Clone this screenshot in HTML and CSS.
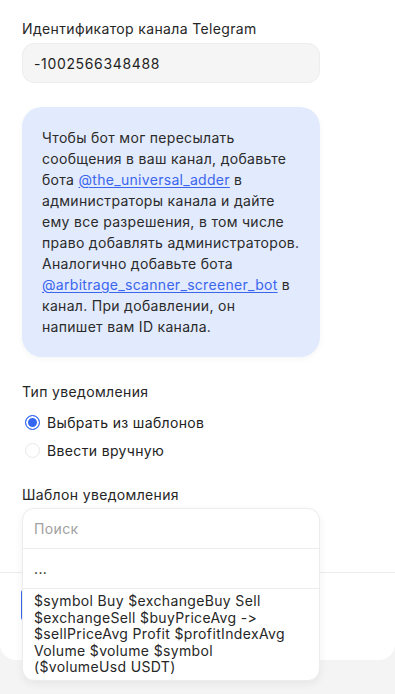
FILE: index.html
```html
<!DOCTYPE html>
<html lang="ru">
<head>
<meta charset="utf-8">
<link rel="stylesheet" href="styles.css">
</head>
<body>
<div class="card">
  <div class="form">
    <div class="label">Идентификатор канала Telegram</div>
    <div class="input">-1002566348488</div>

    <div class="info">Чтобы бот мог пересылать<br>сообщения в ваш канал, добавьте<br>бота <a class="link" href="#">@the_universal_adder</a> в<br>администраторы канала и дайте<br>ему все разрешения, в том числе<br>право добавлять администраторов.<br>Аналогично добавьте бота<br><a class="link" href="#">@arbitrage_scanner_screener_bot</a> в<br>канал. При добавлении, он<br>напишет вам ID канала.</div>

    <div class="label label-type">Тип уведомления</div>
    <div class="radios">
      <div class="radio-row"><span class="radio radio-on"></span><span>Выбрать из шаблонов</span></div>
      <div class="radio-row"><span class="radio"></span><span>Ввести вручную</span></div>
    </div>

    <div class="label label-tpl">Шаблон уведомления</div>
    <div class="select-wrap">
      <div class="select-field"></div>
      <div class="dropdown">
        <div class="dd-row dd-search">Поиск</div>
        <div class="dd-row">...</div>
        <div class="dd-item">$symbol Buy $exchangeBuy Sell $exchangeSell $buyPriceAvg -&gt; $sellPriceAvg Profit $profitIndexAvg Volume $volume $symbol ($volumeUsd USDT)</div>
      </div>
    </div>
  </div>
  <div class="divider"></div>
  <div class="actions">
    <div class="btn"></div>
  </div>
</div>
</body>
</html>
```

FILE: styles.css
```css
* { box-sizing: border-box; }
html, body {
  margin: 0;
  padding: 0;
}
body {
  background: #f4f4f4;
  font-family: Inter, "Noto Sans", sans-serif;
  font-size: 14px;
  letter-spacing: 0.35px;
  font-feature-settings: "calt" 0, "liga" 0;
  color: #232323;
  width: 395px;
  height: 694px;
  overflow: hidden;
}
.card {
  background: #ffffff;
  border-radius: 0 0 16px 16px;
  height: 660px;
  padding-top: 19px;
}
.form {
  padding-left: 22px;
  width: 320px;
  display: flex;
  flex-direction: column;
}
.label {
  line-height: 20px;
  font-size: 14px;
  color: #262626;
}
.input {
  margin-top: 4px;
  height: 40px;
  border-radius: 12px;
  background: #f5f5f5;
  border: 1px solid #ededed;
  padding: 0 11px;
  display: flex;
  align-items: center;
  color: #1f1f1f;
  letter-spacing: 0.65px;
}
.info {
  margin-top: 24px;
  background: #e2eafd;
  border-radius: 20px;
  padding: 20px 4px 20px 20px;
  line-height: 21px;
  letter-spacing: 0.3px;
  white-space: nowrap;
  color: #2b2b2b;
  box-shadow: 0 2px 6px rgba(0,0,0,0.04);
}
.link {
  color: #3a66ee;
  text-decoration: underline;
  text-underline-offset: 2px;
}
.label-type {
  margin-top: 25px;
}
.radios {
  margin-top: 6px;
  display: flex;
  flex-direction: column;
}
.radio-row {
  height: 28px;
  display: flex;
  align-items: center;
  gap: 7px;
  padding-left: 3px;
  color: #222;
}
.radio {
  width: 15px;
  height: 15px;
  border-radius: 50%;
  border: 1.5px solid #e8e8e8;
  background: #fff;
  flex: none;
}
.radio-on {
  border: 1px solid #3367f1;
  background: #3367f1;
  box-shadow: inset 0 0 0 2px #fff;
}
.label-tpl {
  margin-top: 21px;
}
.select-wrap {
  position: relative;
  margin-top: 4px;
}
.select-field {
  height: 40px;
}
.dropdown {
  position: absolute;
  left: 0;
  top: -1px;
  width: 298px;
  background: #fff;
  border: 1px solid #ececec;
  border-radius: 12px;
  box-shadow: 0 3px 8px rgba(0,0,0,0.06);
  z-index: 5;
  overflow: hidden;
}
.dd-row {
  height: 40px;
  display: flex;
  align-items: center;
  padding: 0 11px;
  border-bottom: 1px solid #ececec;
  color: #222;
}
.dd-search {
  color: #a0a0a0;
}
.dd-item {
  padding: 4px 11px 4px 11px;
  line-height: 16.6px;
  color: #262626;
}
.divider {
  margin-top: 23px;
  height: 1px;
  background: #ececec;
}
.actions {
  padding: 16px 0 0 21px;
}
.btn {
  width: 120px;
  height: 32px;
  border-radius: 4px;
  background: #3367f1;
}
```
